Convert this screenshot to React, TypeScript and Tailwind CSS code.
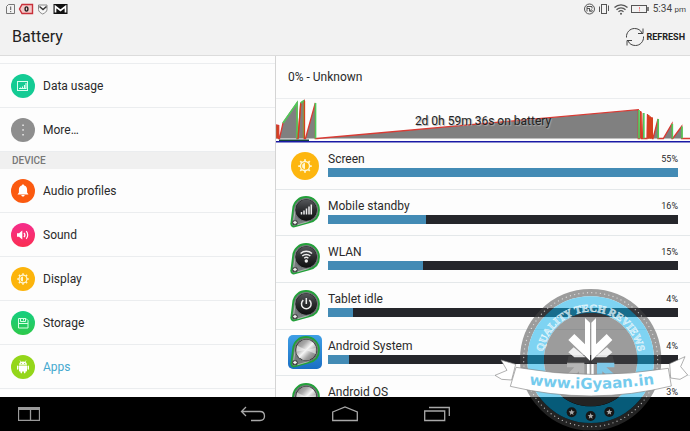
import type { ReactNode } from "react"
import clsx from "clsx"

function DataIcon() {
  return (
    <svg viewBox="0 0 24 24" className="size-6" fill="none" stroke="#d9fff0">
      <rect x="6.5" y="7.5" width="10" height="9" />
      <path d="M9.5 15v-1.5M11.5 15v-2.5M13.5 15v-4M15 15v-6M8 14.5h7" strokeWidth="1.1" />
    </svg>
  )
}

function MoreIcon() {
  return (
    <svg viewBox="0 0 24 24" className="size-6" fill="#eee">
      <rect x="11.3" y="6.5" width="1.5" height="1.5" />
      <rect x="11.3" y="11.2" width="1.5" height="1.5" />
      <rect x="11.3" y="16" width="1.5" height="1.5" />
    </svg>
  )
}

function BellIcon() {
  return (
    <svg viewBox="0 0 24 24" className="size-6" fill="#fff">
      <path d="M12 5.5c.8 0 1.2.5 1.2 1.1 1.9.5 2.9 2 2.9 4.1v2.8l1.4 2H6.500l1.400-2v-2.800c0-2.100 1-3.600 2.900-4.100 0-.6.4-1.100 1.200-1.100z" />
      <path d="M10.3 16h3.400c-.2 1-.9 1.500-1.700 1.500s-1.500-.5-1.700-1.500z" />
    </svg>
  )
}

function SoundIcon() {
  return (
    <svg viewBox="0 0 24 24" className="size-6" fill="none" stroke="#fff" strokeWidth="1.2">
      <path d="M6 10.3h2l3.300-2.800v9L8 13.700H6z" fill="#fff" stroke="none" />
      <path d="M13 9.800c1 1.200 1 3.200 0 4.400M15.200 8.200c2 2 2 5.600 0 7.600" />
    </svg>
  )
}

function SunIcon({ className = "size-6" }: { className?: string }) {
  return (
    <svg viewBox="0 0 24 24" className={className} fill="none" stroke="#fff6d2">
      <circle cx="12" cy="12" r="3.9" strokeWidth="1.2" />
      <path d="M12 9.5a2.5 2.5 0 0 0 0 5z" fill="#fff6d2" stroke="none" />
      <path
        d="M12 8V6.200M12 16v1.800M8 12H6.200M16 12h1.800M9.200 9.200 7.900 7.900M14.800 14.800l1.300 1.300M9.200 14.800l-1.300 1.300M14.800 9.200l1.300-1.300"
        strokeWidth="1.5"
      />
    </svg>
  )
}

function StorageIcon() {
  return (
    <svg viewBox="0 0 24 24" className="size-6" fill="none" stroke="#d7ffe4">
      <path d="M7.500 7.500h7.500l2 2v7.500H7.500z" />
      <path d="M9.500 7.500v3h5v-3M12.500 7.500v2M7.500 12.500h9.500" />
    </svg>
  )
}

function AndroidIcon() {
  return (
    <svg viewBox="0 0 24 24" className="size-6" fill="#fff">
      <path d="M8 9.800C8 7.700 9.600 6.500 12 6.500s4 1.200 4 3.300zM8 10.600h8v4.800c0 .6-.4 1-1 1H9c-.6 0-1-.4-1-1z" />
      <rect x="6" y="10.5" width="1.4" height="4.2" rx=".7" />
      <rect x="16.6" y="10.5" width="1.4" height="4.2" rx=".7" />
      <rect x="9.500" y="15" width="1.6" height="3.4" rx=".8" />
      <rect x="12.9" y="15" width="1.6" height="3.4" rx=".8" />
      <path d="m9 5.500 1 1.600M15 5.500l-1 1.600" stroke="#fff" strokeWidth=".7" />
      <circle cx="10.3" cy="8.500" r=".5" fill="#8c1" />
      <circle cx="13.7" cy="8.500" r=".5" fill="#8c1" />
    </svg>
  )
}

function SettingsRow({ label, color, icon, active }: { label: string; color: string; icon: ReactNode; active?: boolean }) {
  return (
    <a href="#" className="flex h-11 items-center gap-2 border-b border-[#ebedef] pl-[11px]">
      <span className={clsx("flex size-6 items-center justify-center rounded-full", color)}>{icon}</span>
      <span className={active ? "text-[#45a9cf]" : "text-[#2a2a2a]"}>{label}</span>
    </a>
  )
}

// green teardrop dial used by the themed system icons
function DialIcon({ metal, tile, children }: { metal?: boolean; tile?: boolean; children?: ReactNode }) {
  return (
    <svg viewBox="0 0 34 34" className="size-[34px]">
      <defs>
        <linearGradient id="dark" x1="0" y1="0" x2="0" y2="1">
          <stop offset="0" stopColor="#55575a" />
          <stop offset=".5" stopColor="#2b2c2e" />
          <stop offset="1" stopColor="#111" />
        </linearGradient>
        <linearGradient id="steel" x1="0" y1="0" x2="1" y2="1">
          <stop offset="0" stopColor="#777" />
          <stop offset=".3" stopColor="#aaa" />
          <stop offset=".5" stopColor="#f5f5f5" />
          <stop offset=".7" stopColor="#a2a2a2" />
          <stop offset="1" stopColor="#666" />
        </linearGradient>
        <linearGradient id="tile" x1="0" y1="0" x2="0" y2="1">
          <stop offset="0" stopColor="#3f9fe6" />
          <stop offset="1" stopColor="#1a6fc4" />
        </linearGradient>
      </defs>
      {tile && <rect width="34" height="34" rx="5" fill="url(#tile)" />}
      <path
        d="M5.200 13C6 6.500 11.500 2 18 2c7.500 0 13 6 13 13 0 6.500-4 11-10 12.500L6.500 31.500c-2 .5-3.500-1-3.200-3z"
        fill="#777c7e"
        stroke="#23a03a"
        strokeWidth="1.8"
      />
      <path d="M5.500 26.500 7.500 13M9.500 29.800l11-3.300" stroke="#c4d0c4" strokeWidth=".7" />
      <circle cx="18.2" cy="15" r="11.2" fill="#191a1b" stroke="#8a8e90" strokeWidth=".7" />
      <circle cx="18.2" cy="15" r="10.400" fill={metal ? "url(#steel)" : "url(#dark)"} />
      {metal && <path d="M18.200 15 9 10.500v6zM18.200 15l9.500 4v-6z" fill="#fff" opacity=".5" />}
      <circle cx="7" cy="27.500" r="2.600" fill="#333" />
      <path d="M5.200 27.500h3.600M7 25.700v3.600" stroke="#f4f4f4" strokeWidth="1.400" />
      {children}
    </svg>
  )
}

const usage = [
  {
    name: "Screen",
    percent: "55%",
    fill: 100,
    icon: (
      <span className="flex size-7 items-center justify-center rounded-full bg-[#fdb60f]">
        <SunIcon className="size-7" />
      </span>
    ),
  },
  {
    name: "Mobile standby",
    percent: "16%",
    fill: 28,
    icon: (
      <DialIcon>
        <path d="M13.500 19.500v-2.500M16 19.500v-4M18.500 19.500v-6M21 19.500v-8M23.300 19.500v-10" stroke="#eee" strokeWidth="1.5" />
      </DialIcon>
    ),
  },
  {
    name: "WLAN",
    percent: "15%",
    fill: 27,
    icon: (
      <DialIcon>
        <g fill="none" stroke="#eee" strokeWidth="1.4">
          <path d="M12.600 11.500c3.200-3 8.200-3 11.400 0M14.300 14c2.200-2 5.800-2 8 0M16.200 16.200c1.200-1 3-1 4.200 0" />
          <circle cx="18.300" cy="19" r="1.700" fill="#eee" stroke="none" />
        </g>
      </DialIcon>
    ),
  },
  {
    name: "Tablet idle",
    percent: "4%",
    fill: 7,
    icon: (
      <DialIcon>
        <path d="M18.300 9v6M15.300 11.200a4.800 4.800 0 1 0 6 0" fill="none" stroke="#eee" strokeWidth="1.5" />
      </DialIcon>
    ),
  },
  { name: "Android System", percent: "4%", fill: 6, icon: <DialIcon metal tile /> },
  { name: "Android OS", percent: "3%", fill: 5, icon: <DialIcon metal /> },
]

function StatusBar() {
  return (
    <div className="flex h-[18px] items-center justify-between pr-1 pl-[6px] text-[#444]">
      <svg viewBox="0 0 62 12" className="h-3 w-[62px]">
        <path d="M2.500 1.500h6v9H.5v-7z" fill="none" stroke="#777" />
        <path d="M4.700 3.500v3.500M4.700 8v1.200" stroke="#555" />
        <path d="M16 1.500h10.500v9H16l-2.500-4.500z" fill="#f4c9c9" stroke="#c8303a" strokeWidth="1.4" />
        <ellipse cx="20.5" cy="6" rx="1.4" ry="2.1" fill="none" stroke="#222" strokeWidth="1.4" />
        <path d="M32.500 2h8.500v4.500c0 2-2 3.500-4.300 4.500-2.200-1-4.200-2.500-4.200-4.500z" fill="#f8f8f8" stroke="#888" />
        <path d="M33.500 3.500 37 6.500l3.500-3" fill="none" stroke="#333" strokeWidth="1.5" />
        <rect x="47.5" y="1" width="14" height="10" fill="#111" />
        <path d="M49.500 9.500v-6l5 4 5-4v6" fill="none" stroke="#fff" strokeWidth="1.7" />
      </svg>
      <div className="flex items-center gap-1">
        <svg viewBox="0 0 67 14" className="h-3.5 w-[67px]" fill="none" stroke="#555">
          <circle cx="7.5" cy="7" r="5" />
          <path d="M5 9.500V4.500h5v2M5 6.500h2.500M7.500 6v3.500" />
          <circle cx="9.3" cy="8.8" r="1" />
          <rect x="19.500" y="2.500" width="5" height="9" />
          <path d="M17.500 4.500v5.500M26.500 3.500v5.500" />
          <path d="M32.500 5.500c3.600-3.600 9.400-3.600 13 0M34.500 7.700c2.500-2.500 6.500-2.500 9 0M36.500 9.900c1.500-1.500 3.500-1.500 5 0" strokeWidth="1.3" />
          <circle cx="39" cy="11.8" r="1" fill="#555" stroke="none" />
          <rect x="49.500" y="3.500" width="15" height="7" />
          <path d="M66 5v4" strokeWidth="1.5" />
          <path d="M57.500 5v2.500M57.500 8.300v1" stroke="#f08080" />
        </svg>
        <span className="text-[10px] leading-3">
          5:34 <span className="text-[8px]">pm</span>
        </span>
      </div>
    </div>
  )
}

function BatteryChart() {
  const line =
    "0,26 2.7,26.5 2.7,39.5 3.5,39.5 7,24 21,4 21,39.5 22,39.5 24.7,4 28.3,1.5 28.3,39.5 29.5,39.5 39.3,4 39.3,39.5 41,39.5 362.3,10.7 362.3,39.5 363.5,39.5 364.7,12 365.5,39.5 366.5,39.5 367.3,14 367.5,39.5 371,39.5 371.5,15 372.5,39.5 374,17 374.5,39.5 376,18 376.5,39.5 377,39.5 382,20 382,39.5 387.3,39.5 396,24.7 396,39.5 396.7,39.5 405.7,27.3 405.7,39.5 414,39.5"
  return (
    <div className="relative h-11">
      <svg viewBox="0 0 414 44" preserveAspectRatio="none" className="h-11 w-full" fill="none">
        <polygon points={`0,39.5 ${line}`} fill="#808080" />
        <polyline points={line} stroke="#d93a33" strokeWidth="1.3" />
        <path d="M1.300 27v12.500M372.500 16v23.500M374.500 18v21.500M376 19v20.500" stroke="#d5401e" strokeWidth="2" />
        <path
          d="M7 24 21 4v35.500M24.700 4l3.600-2.500M39.500 4v35.500M363 11v28.500M367.800 14v25.500M382.200 20v19.500M396.300 25v14.500M406 27.500v12"
          stroke="#4ccb5c"
          strokeWidth="1.7"
        />
        <path d="M28.500 2v37.500M22 39.500 24.700 5M365 13v26.500" stroke="#d5401e" strokeWidth="1.3" />
        <path d="M27.300 3v36" stroke="#8a9a3a" />
        <path d="M3 41.300h30" stroke="#12423a" strokeWidth="1.6" />
        <path d="M0 42.700h414" stroke="#1a1aa5" strokeWidth="1.4" />
      </svg>
      <p className="absolute inset-x-0 top-3.5 text-center leading-4 text-[#222] [text-shadow:1px_1px_1px_#aaa]">
        2d 0h 59m 36s on battery
      </p>
    </div>
  )
}

function Watermark() {
  const star = "M0-9 2.600-3 9-2.500 4 1.700 5.600 8 0 4.500-5.600 8-4 1.700-9-2.500-2.600-3z"
  return (
    <svg viewBox="0 0 585 468" className="pointer-events-none absolute right-0 bottom-0 h-[156px] w-[195px]">
      <defs>
        <path id="arc" d="M143 254a144 144 0 0 1 288 0" />
        <path id="ribbon" d="M102 328Q288 356 484 326" />
      </defs>
      <g fill="none" opacity=".52">
        <circle cx="287" cy="254" r="201" stroke="#444" strokeWidth="22" />
        <circle cx="287" cy="254" r="165" stroke="#0caee8" strokeWidth="50" />
        <circle cx="287" cy="254" r="140" fill="#444" />
      </g>
      <circle
        cx="287"
        cy="254"
        r="201"
        fill="none"
        stroke="#fff"
        strokeWidth="4"
        strokeLinecap="round"
        strokeDasharray="0 13"
        opacity=".65"
      />
      <text
        fontFamily="Liberation Serif, serif"
        fontWeight="700"
        fontSize="32"
        fill="#c4e8f5"
        stroke="#fff"
        strokeWidth="1.5"
        textAnchor="middle"
        opacity=".8"
      >
        <textPath href="#arc" startOffset="50%">
          QUALITY TECH REVIEWS
        </textPath>
      </text>
      <path d="M221 242h49l13 12v10h-67zM353 242h-49l-13 12v10h67z" fill="#555" opacity=".4" />
      <g fill="#fff">
        <path d="M270 129l15 14v114l-65-62 18-18 32 31zM303 129l-14 14v114l63-62-17-18-32 31z" />
        <path d="m220 232 16-15 36 30h-34zM352 232l-16-15-36 30h34z" opacity=".85" />
        <path d="M276 267h8v50h-8zM289 267h7v50h-7z" />
      </g>
      <path d="M216 263h52v50l-16-14v-10l-28 26-12-12 26-26h-22z" fill="#bbb" opacity=".85" />
      <path d="M358 263h-52v50l16-14v-10l24 22 14-12-26-22h24z" fill="#7fc8e8" />
      <g fill="#fff" stroke="#888" strokeWidth="2">
        <path d="M62 268 18 255l18 31L0 301l20 12 30 2zM524 266l46-21-13 30 21 25-23 13-28-4z" />
        <path d="M63 277Q290 318 520 280L529 333Q290 392 46 334Z" />
      </g>
      <text fontFamily="DejaVu Sans, sans-serif" fontWeight="700" fontSize="45" fill="#75cbed">
        <textPath href="#ribbon">www.iGyaan.in</textPath>
      </text>
      {[
        [230, 412],
        [287, 423],
        [343, 411],
      ].map(([x, y]) => (
        <g key={x} transform={`translate(${x} ${y})`}>
          <circle r="15" fill="#161616" />
          <path d={star} fill="#aaa" />
        </g>
      ))}
    </svg>
  )
}

export default function App() {
  return (
    <div className="relative flex h-screen flex-col overflow-hidden bg-[#fdfdfd] font-[Roboto,sans-serif] text-xs text-[#2a2a2a]">
      <header className="border-b border-[#dcdcdc] bg-[#f2f2f2]">
        <StatusBar />
        <div className="flex h-[37px] items-center justify-between pr-[5px] pl-3">
          <h1 className="text-base text-[#222]">Battery</h1>
          <button className="flex items-center gap-0.5 text-[9px] font-bold text-[#222]">
            <svg viewBox="0 0 20 20" className="size-5" fill="none" stroke="#444">
              <path d="M1.500 10.500C1 5.500 5 1.500 9.500 1.500c3.500 0 6 1.500 7.500 4.500M18 1.500v5h-5M18.500 9.500c.5 5-3.500 9-8 9-3.500 0-6-1.500-7.500-4.500M2 18.500v-5h5" />
            </svg>
            REFRESH
          </button>
        </div>
      </header>

      <main className="flex min-h-0 flex-1">
        <nav className="w-2/5 overflow-hidden border-r border-[#d4d4d4]">
          <div className="h-2 border-b border-[#ebedef]" />
          <SettingsRow label="Data usage" color="bg-[#14cb94]" icon={<DataIcon />} />
          <SettingsRow label="More…" color="bg-[#8e8e8e]" icon={<MoreIcon />} />
          <h2 className="h-[17px] bg-[#f0f0f0] pl-3 text-[10px] leading-[17px] font-medium text-[#777]">DEVICE</h2>
          <SettingsRow label="Audio profiles" color="bg-[#fb5a10]" icon={<BellIcon />} />
          <SettingsRow label="Sound" color="bg-linear-to-b from-[#f52c8c] to-[#fb2d50]" icon={<SoundIcon />} />
          <SettingsRow label="Display" color="bg-[#fcb40c]" icon={<SunIcon />} />
          <SettingsRow label="Storage" color="bg-linear-to-b from-[#14ce80] to-[#2cc948]" icon={<StorageIcon />} />
          <SettingsRow label="Apps" color="bg-[#94d61a]" icon={<AndroidIcon />} active />
        </nav>

        <section className="min-w-0 flex-1 overflow-hidden">
          <p className="h-[43px] border-b border-[#ebedef] pl-3 leading-[43px]">0% - Unknown</p>
          <BatteryChart />
          <ul className="grid h-[280px] auto-rows-fr">
            {usage.map((item) => (
              <li key={item.name} className="flex gap-1.5 border-b border-[#e4e8ea] px-3">
                <span className="flex w-[34px] shrink-0 items-center justify-center">{item.icon}</span>
                <div className="flex-1 pt-2">
                  <div className="mb-px flex h-4 items-center justify-between leading-4">
                    <span>{item.name}</span>
                    <span className="text-[9px]">{item.percent}</span>
                  </div>
                  <div className="h-[9px] bg-[#25262b]">
                    <div className="h-full bg-[#438bb5]" style={{ width: `${item.fill}%` }} />
                  </div>
                </div>
              </li>
            ))}
          </ul>
        </section>
      </main>

      <footer className="grid h-[34px] shrink-0 grid-cols-[1fr_auto_1fr] items-center bg-black">
        <button aria-label="Split screen" className="ml-[18px] w-[22px]">
          <svg viewBox="0 0 22 14" className="h-3.5 w-[22px]" fill="none" stroke="#9a9a9a">
            <path d="M0 1.500h22" strokeWidth="3" />
            <path d="M.5 1v12.500h21V1M12.500 1v12.500" strokeWidth="1.300" />
          </svg>
        </button>
        <div className="flex">
          <button aria-label="Back" className="flex w-[92px] justify-center">
            <svg viewBox="0 0 26 16" className="h-4 w-[26px]" fill="none" stroke="#a8a8a8" strokeWidth="1.3">
              <path d="M6 1 1.500 5.500 6 10M1.500 5.500H20c6 0 6 9 0 9h-9" />
            </svg>
          </button>
          <button aria-label="Home" className="flex w-[92px] justify-center">
            <svg viewBox="0 0 26 16" className="h-4 w-[26px]" fill="none" stroke="#a8a8a8" strokeWidth="1.3">
              <path d="M.7 6 13 1l12.300 5v8.500H.7z" />
            </svg>
          </button>
          <button aria-label="Recent apps" className="flex w-[92px] justify-center">
            <svg viewBox="0 0 26 16" className="h-4 w-[26px]" fill="none" stroke="#a8a8a8" strokeWidth="1.3">
              <path d="M.7 5h20v9.500H.7zM5 1.500h20.300V10" />
            </svg>
          </button>
        </div>
      </footer>

      <Watermark />
    </div>
  )
}
